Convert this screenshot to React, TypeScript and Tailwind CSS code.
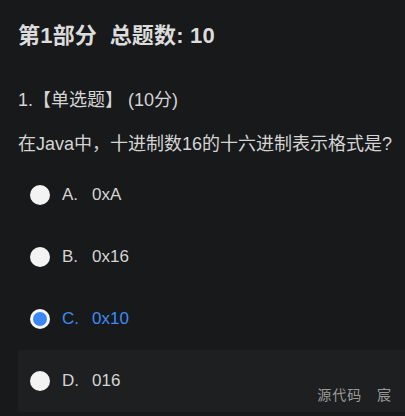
import React from "react";

const options = [
  { k: "A.", v: "0xA" },
  { k: "B.", v: "0x16" },
  { k: "C.", v: "0x10", selected: true },
  { k: "D.", v: "016", hover: true },
];

export default function App() {
  return (
    <div
      className="relative w-[405px] h-[416px] overflow-hidden bg-[#18191b] text-[#d4d4d4]"
      style={{ fontFamily: '"Liberation Sans", Arial, "Noto Sans CJK SC", sans-serif' }}
    >
      <div className="pl-[18px] pt-[22px]">
        <h1 className="text-[22px] font-bold leading-[28px] text-[#dcdcdc] tracking-[0.2px]">第1部分&nbsp;&nbsp;总题数: 10</h1>
        <div className="mt-[38px] text-[18px] leading-[24px]">1.【单选题】 (10分)</div>
        <div className="mt-[20px] text-[18px] leading-[24px]">在Java中，十进制数16的十六进制表示格式是?</div>
        <div className="mt-[8px] flex flex-col">
          {options.map((o) => (
            <div
              key={o.k}
              className={`flex h-[62px] items-center pl-[12px] ${o.hover ? "bg-[#1e1f21]" : ""} ${o.selected ? "text-[#3d8cf5]" : ""}`}
            >
              {o.selected ? (
                <span className="flex h-[20px] w-[20px] items-center justify-center rounded-full bg-[#f5f5f5]">
                  <span className="h-[14px] w-[14px] rounded-full bg-[#3d86f5]" />
                </span>
              ) : (
                <span className="h-[20px] w-[20px] rounded-full bg-[#f3f3f3]" />
              )}
              <span className="ml-[12px] w-[30px] text-[17px]">{o.k}</span>
              <span className="text-[17px]">{o.v}</span>
            </div>
          ))}
        </div>
      </div>
      <div className="absolute bottom-[10px] right-[13px] text-[14px] text-[#9a9a9a] tracking-[1px]">
        源代码&nbsp;&nbsp;&nbsp;宸
      </div>
    </div>
  );
}
